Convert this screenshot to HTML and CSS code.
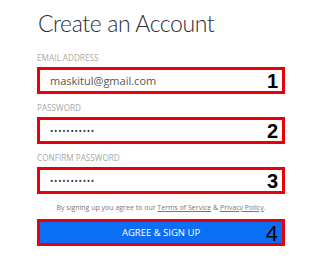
FILE: index.html
```html
<!DOCTYPE html>
<html lang="en">
<head>
    <meta charset="UTF-8">
    <meta name="viewport" content="width=device-width, initial-scale=1.0">
    <title>Create an Account</title>
    <link rel="stylesheet" href="styles.css">
</head>
<body>
    <div class="signup">
        <h1>Create an Account</h1>

        <div class="field">
            <label>EMAIL ADDRESS</label>
            <div class="box">
                <span class="value">maskitul@gmail.com</span>
                <span class="step">1</span>
            </div>
        </div>

        <div class="field">
            <label>PASSWORD</label>
            <div class="box">
                <span class="value dots">•••••••••••</span>
                <span class="step">2</span>
            </div>
        </div>

        <div class="field">
            <label>CONFIRM PASSWORD</label>
            <div class="box">
                <span class="value dots">•••••••••••</span>
                <span class="step">3</span>
            </div>
        </div>

        <p class="terms">By signing up you agree to our <a href="#">Terms of Service</a> &amp; <a href="#">Privacy Policy</a>.</p>

        <button class="submit">
            <span>AGREE &amp; SIGN UP</span>
            <span class="step step-plain">4</span>
        </button>
    </div>
</body>
</html>
```

FILE: styles.css
```css
body {
    margin: 0;
    background: #ffffff;
    font-family: 'Open Sans', 'Liberation Sans', sans-serif;
    color: #333;
}

.signup {
    width: 248px;
    padding: 8px 0 0 37px;
}

h1 {
    margin: 0 0 15px 1px;
    font-family: Lato, 'Open Sans', sans-serif;
    font-size: 23px;
    line-height: 30px;
    font-weight: 300;
    letter-spacing: -0.4px;
    color: #2b2b33;
}

.field {
    margin-bottom: 9px;
}

.field label {
    display: block;
    font-size: 8.2px;
    line-height: 10px;
    color: #a8a8a8;
    margin-bottom: 4px;
}

.box {
    height: 21px;
    border: 3px solid #e8000b;
    background: #fff;
    display: flex;
    align-items: center;
    justify-content: space-between;
    padding: 0 4px 0 10px;
}

.value {
    font-size: 11px;
    color: #555;
}

.dots {
    font-size: 9px;
    letter-spacing: 0.7px;
    color: #333;
}

.step {
    font-family: 'Liberation Sans', Arial, sans-serif;
    font-weight: bold;
    font-size: 20px;
    color: #000;
    line-height: 1;
}

.terms {
    margin: 0 0 6px;
    text-align: center;
    font-size: 7px;
    line-height: 10px;
    color: #777;
}

.terms a {
    color: #777;
}

.submit {
    width: 248px;
    height: 27px;
    border: 3px solid #e8000b;
    background: #0b6ef6;
    color: #fff;
    font-family: 'Open Sans', 'Liberation Sans', sans-serif;
    font-size: 9.5px;
    display: flex;
    align-items: center;
    justify-content: center;
    position: relative;
    padding: 0;
    cursor: pointer;
}

.step-plain {
    position: absolute;
    right: 4px;
    top: 1px;
    font-weight: normal;
    font-size: 22px;
}
```
